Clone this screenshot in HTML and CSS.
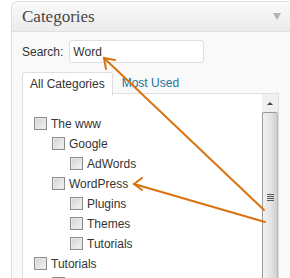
FILE: index.html
```html
<!DOCTYPE html>
<html lang="en">
<head>
    <meta charset="UTF-8">
    <title>Categories</title>
    <link rel="stylesheet" href="styles.css">
</head>
<body>
    <div class="postbox">
        <div class="handle">
            <h3>Categories</h3>
            <span class="toggle"></span>
        </div>
        <div class="inside">
            <div class="search">
                <label for="cat-search">Search:</label>
                <input type="text" id="cat-search" value="Word">
            </div>
            <ul class="tabs">
                <li class="tab active">All Categories</li>
                <li class="tab"><a href="#">Most Used</a></li>
            </ul>
            <div class="panel">
                <ul class="checklist">
                    <li><span class="check"></span>The www
                        <ul class="children">
                            <li><span class="check"></span>Google
                                <ul class="children">
                                    <li><span class="check"></span>AdWords</li>
                                </ul>
                            </li>
                            <li><span class="check"></span>WordPress
                                <ul class="children">
                                    <li><span class="check"></span>Plugins</li>
                                    <li><span class="check"></span>Themes</li>
                                    <li><span class="check"></span>Tutorials</li>
                                </ul>
                            </li>
                        </ul>
                    </li>
                    <li><span class="check"></span>Tutorials
                        <ul class="children">
                            <li><span class="check"></span></li>
                        </ul>
                    </li>
                </ul>
                <div class="scrollbar">
                    <div class="arrow-up"></div>
                    <div class="thumb"><span class="grip"></span></div>
                </div>
            </div>
        </div>
    </div>

    <!-- annotation arrows drawn over the screenshot -->
    <svg class="arrows" width="290" height="278" viewBox="0 0 290 278">
        <g stroke="#d9730f" stroke-width="2" fill="none" stroke-linecap="round">
            <line x1="264" y1="210" x2="104" y2="58"/>
            <polyline points="106,69 104,58 115,60"/>
            <line x1="265" y1="222" x2="134" y2="184"/>
            <polyline points="142,178 134,184 142,190"/>
        </g>
    </svg>
</body>
</html>
```

FILE: styles.css
```css
body {
    margin: 0;
    padding: 0;
    width: 290px;
    height: 278px;
    overflow: hidden;
    background-color: #fff;
    font-family: "Liberation Sans", Arial, sans-serif;
    font-size: 12px;
    color: #333;
    position: relative;
}

.postbox {
    margin: 1px 0 0 11px;
    width: 300px;
    height: 300px;
    border: 1px solid #dfdfdf;
    border-radius: 6px 6px 0 0;
    background-color: #f9f9f9;
}

.handle {
    height: 29px;
    display: flex;
    align-items: center;
    justify-content: space-between;
    padding: 0 31px 0 10px;
    border-bottom: 1px solid #dfdfdf;
    border-radius: 6px 6px 0 0;
    background: linear-gradient(#f9f9f9, #ececec);
}

.handle h3 {
    margin: 0;
    font-family: "Liberation Serif", "Times New Roman", serif;
    font-weight: normal;
    font-size: 17px;
    color: #464646;
}

.toggle {
    width: 0;
    height: 0;
    border-left: 4px solid transparent;
    border-right: 4px solid transparent;
    border-top: 7px solid #b4b4b4;
}

.inside {
    padding: 8px 0 0 10px;
}

.search {
    display: flex;
    align-items: center;
    gap: 6px;
}

.search input {
    width: 135px;
    height: 23px;
    box-sizing: border-box;
    padding: 0 3px;
    border: 1px solid #dfdfdf;
    border-radius: 3px;
    background: #fff;
    font-family: inherit;
    font-size: 12px;
    color: #333;
}

.tabs {
    list-style: none;
    margin: 9px 0 0;
    padding: 0;
    display: flex;
    height: 22px;
}

.tab {
    padding: 3px 9px 0 9px;
    line-height: 17px;
    font-size: 12px;
}

.tab.active {
    padding: 3px 7px 0 7px;
    background: #fff;
    border: 1px solid #dfdfdf;
    border-bottom: none;
    border-radius: 3px 3px 0 0;
    height: 20px;
    position: relative;
    z-index: 1;
}

.tab a {
    color: #21759b;
    text-decoration: none;
}

.panel {
    width: 255px;
    height: 200px;
    border: 1px solid #dfdfdf;
    background: #fff;
    display: flex;
    justify-content: space-between;
    margin-top: -1px;
}

.checklist {
    list-style: none;
    margin: 0;
    padding: 20px 0 0 11px;
    line-height: 20px;
}

.checklist ul {
    list-style: none;
    margin: 0;
    padding: 0 0 0 18px;
}

.check {
    display: inline-block;
    width: 11px;
    height: 11px;
    margin-right: 4px;
    vertical-align: -2px;
    border: 1px solid #8d8d8d;
    background: linear-gradient(135deg, #d2d2d2, #f4f4f4);
    box-shadow: inset 0 0 0 1px #e8e8e8;
}

.scrollbar {
    width: 16px;
    display: flex;
    flex-direction: column;
    background: #f0f0f0;
}

.arrow-up {
    height: 18px;
    display: flex;
    align-items: center;
    justify-content: center;
}

.arrow-up::before {
    content: "";
    border-left: 3px solid transparent;
    border-right: 3px solid transparent;
    border-bottom: 3px solid #444;
}

.thumb {
    flex: 1;
    border: 1px solid #9a9a9a;
    border-right-color: #b8b8b8;
    border-radius: 2px;
    background: linear-gradient(to right, #f2f2f2, #e2e2e2 60%, #cfcfcf);
    display: flex;
    justify-content: center;
    padding-top: 81px;
}

.grip {
    width: 7px;
    height: 7px;
    background: repeating-linear-gradient(#555 0, #555 1px, transparent 1px, transparent 2px);
}

.arrows {
    position: absolute;
    left: 0;
    top: 0;
    pointer-events: none;
}
```
